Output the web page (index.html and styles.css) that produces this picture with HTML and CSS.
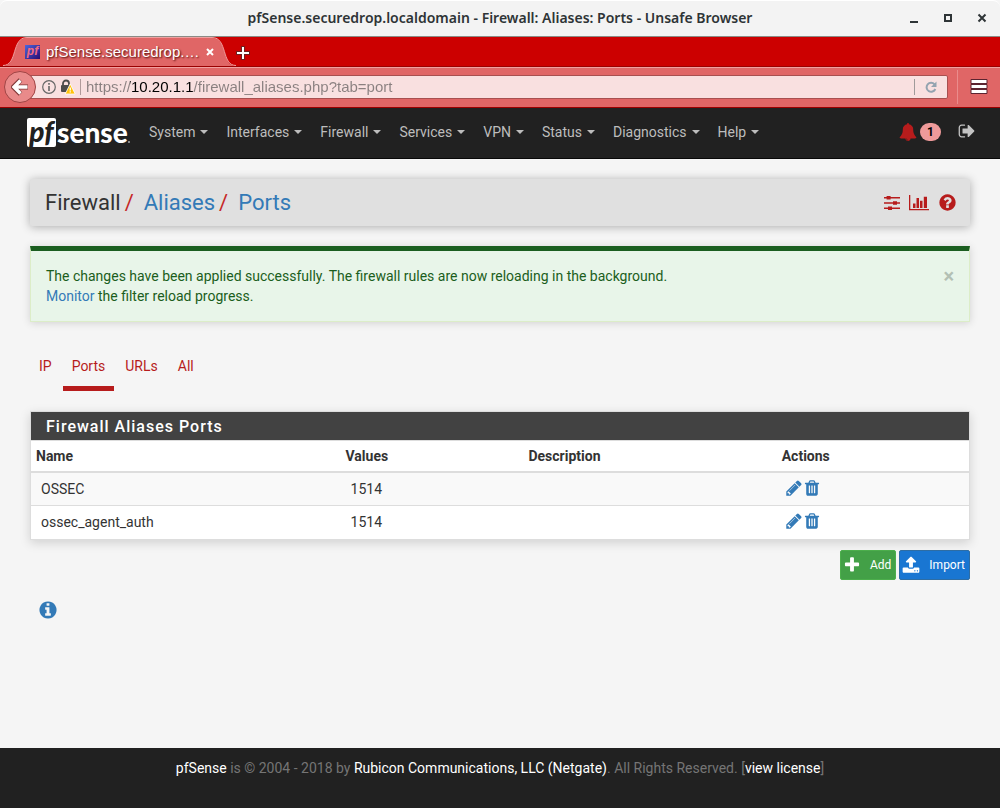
FILE: index.html
```html
<!DOCTYPE html>
<html lang="en">
<head>
<meta charset="utf-8">
<meta name="viewport" content="width=device-width, initial-scale=1">
<title>pfSense.securedrop.localdomain - Firewall: Aliases: Ports</title>
<link rel="stylesheet" href="styles.css">
</head>
<body>
<svg class="defs" width="0" height="0" aria-hidden="true">
  <symbol id="i-pencil" viewBox="0 0 1792 1792"><path d="M491 1536l91-91-235-235-91 91v107h128v128h107zm523-928q0-22-22-22-10 0-17 7l-542 542q-7 7-7 17 0 22 22 22 10 0 17-7l542-542q7-7 7-17zm-54-192l416 416-832 832h-416v-416zm683 96q0 53-37 90l-166 166-416-416 166-165q36-38 90-38 53 0 91 38l235 234q37 39 37 91z"/></symbol>
  <symbol id="i-trash" viewBox="0 0 1792 1792"><path d="M704 1376v-704q0-14-9-23t-23-9h-64q-14 0-23 9t-9 23v704q0 14 9 23t23 9h64q14 0 23-9t9-23zm256 0v-704q0-14-9-23t-23-9h-64q-14 0-23 9t-9 23v704q0 14 9 23t23 9h64q14 0 23-9t9-23zm256 0v-704q0-14-9-23t-23-9h-64q-14 0-23 9t-9 23v704q0 14 9 23t23 9h64q14 0 23-9t9-23zm-544-992h448l-48-117q-7-9-17-11h-317q-10 2-17 11zm928 32v64q0 14-9 23t-23 9h-96v948q0 83-47 143.5t-113 60.5h-832q-66 0-113-58.5t-47-141.5v-952h-96q-14 0-23-9t-9-23v-64q0-14 9-23t23-9h309l70-167q15-37 54-63t79-26h320q40 0 79 26t54 63l70 167h309q14 0 23 9t9 23z"/></symbol>
</svg>

<header class="browser">
  <div class="titlebar">
    <div class="window-title">pfSense.securedrop.localdomain - Firewall: Aliases: Ports - Unsafe Browser</div>
    <div class="window-controls">
      <button type="button" aria-label="Minimize"><svg width="10" height="10" viewBox="0 0 10 10"><path d="M1 8h8v2H1z" fill="#2e3436"/></svg></button>
      <button type="button" aria-label="Maximize"><svg width="10" height="10" viewBox="0 0 10 10"><path d="M2 2h6v6H2z" fill="none" stroke="#2e3436" stroke-width="2"/></svg></button>
      <button type="button" aria-label="Close"><svg width="10" height="10" viewBox="0 0 10 10"><path d="M1.500 1.500l7 7m0-7l-7 7" stroke="#2e3436" stroke-width="2"/></svg></button>
    </div>
  </div>
  <div class="tabstrip">
    <div class="browser-tab">
      <svg class="tab-shape" width="240" height="29" viewBox="0 0 240 29" aria-hidden="true"><path d="M3 29C18 29 11 1 27 1H212C228 1 221 29 236 29Z" fill="#e06666"/><path d="M3 28.500C18 28.500 11 .5 27 .5H212C228 .5 221 28.500 236 28.500" fill="none" stroke="#f0a0a0"/></svg>
      <span class="favicon">pf</span>
      <span class="tab-title">pfSense.securedrop.…</span>
      <button type="button" class="tab-close" aria-label="Close tab"><svg width="8" height="8" viewBox="0 0 8 8"><path d="M1 1l6 6m0-6L1 7" stroke="#fff" stroke-width="2"/></svg></button>
    </div>
    <button type="button" class="new-tab" aria-label="New tab"><svg width="14" height="14" viewBox="0 0 14 14"><path d="M7 0v14M0 7h14" stroke="#6d2020" stroke-width="4"/><path d="M7 1v12M1 7h12" stroke="#fff" stroke-width="2"/></svg></button>
  </div>
  <div class="toolbar">
    <button type="button" class="back" aria-label="Back"><svg width="18" height="18" viewBox="0 0 18 18"><path d="M9.500 2L2.500 9L9.500 16M3 9H17" fill="none" stroke="#7d3434" stroke-width="5"/><path d="M9.500 2.500L3 9L9.500 15.500M3 9H16.500" fill="none" stroke="#fff" stroke-width="3.400"/></svg></button>
    <div class="urlbar">
      <svg width="14" height="14" viewBox="0 0 14 14"><circle cx="7" cy="7" r="6.300" fill="none" stroke="#666" stroke-width="1.200"/><path d="M6.200 6h1.600v5H6.200zM6.200 3h1.600v1.800H6.200z" fill="#666"/></svg>
      <svg width="16" height="16" viewBox="0 0 16 16"><path d="M3 7V4.500a3 3 0 0 1 6 0V7" fill="none" stroke="#4c4c4c" stroke-width="1.800"/><rect x="1" y="6" width="9" height="7" rx="1" fill="#4c4c4c"/><path d="M10.200 5l5 10H5.200z" fill="#ffc20a" stroke="#fff" stroke-width=".8"/><path d="M9.600 8.500h1.300v3H9.600zm0 3.700h1.300v1.200H9.600z" fill="#fff"/></svg>
      <input class="url" type="text" aria-label="Address" value="https://10.20.1.1/firewall_aliases.php?tab=port">
      <button type="button" class="reload" aria-label="Reload"><svg width="12" height="12" viewBox="0 0 12 12"><path d="M9.500 3.300A4.500 4.500 0 1 0 10.300 8" fill="none" stroke="#94a3b0" stroke-width="2"/><path d="M11.500 .5v5.500H6z" fill="#94a3b0"/></svg></button>
    </div>
    <button type="button" class="menu" aria-label="Menu"><svg width="18" height="16" viewBox="0 0 18 16"><path d="M1 .5h16v4H1zM1 5.500h16v4H1zM1 10.500h16v4H1z" fill="#fff" stroke="#5c2430"/></svg></button>
  </div>
</header>

<nav class="navbar">
  <a class="logo" href="#" aria-label="pfSense home"><span class="logo-pf">pf</span><span class="logo-sense">sense</span><i class="logo-dot"></i></a>
  <ul class="menu-list">
    <li><a href="#">System <i class="caret"></i></a></li>
    <li><a href="#">Interfaces <i class="caret"></i></a></li>
    <li><a href="#">Firewall <i class="caret"></i></a></li>
    <li><a href="#">Services <i class="caret"></i></a></li>
    <li><a href="#">VPN <i class="caret"></i></a></li>
    <li><a href="#">Status <i class="caret"></i></a></li>
    <li><a href="#">Diagnostics <i class="caret"></i></a></li>
    <li><a href="#">Help <i class="caret"></i></a></li>
  </ul>
  <a class="alerts" href="#" aria-label="Notices"><svg width="18" height="18" viewBox="0 0 1792 1792"><path fill="#b71c1c" d="M912 1696q0-16-16-16-59 0-101.500-42.500t-42.500-101.500q0-16-16-16t-16 16q0 73 51.500 124.500t124.500 51.500q16 0 16-16zm816-288q0 52-38 90t-90 38h-448q0 106-75 181t-181 75-181-75-75-181h-448q-52 0-90-38t-38-90q50-42 91-88t85-119.500 74.500-158.500 50-206 19.500-260q0-152 117-282.500t307-158.500q-8-19-8-39 0-40 28-68t68-28 68 28 28 68q0 20-8 39 190 28 307 158.500t117 282.500q0 139 19.500 260t50 206 74.500 158.500 85 119.500 91 88z"/></svg><span class="badge">1</span></a>
  <a class="signout" href="#" aria-label="Log out"><svg width="18" height="18" viewBox="0 0 1792 1792"><path fill="#c4c4c4" d="M704 1440q0 4 1 20t.5 26.500-3 23.500-10 19.500-20.500 6.500h-320q-119 0-203.500-84.500t-84.500-203.500v-704q0-119 84.500-203.500t203.500-84.500h320q13 0 22.500 9.500t9.500 22.500q0 4 1 20t.5 26.500-3 23.500-10 19.500-20.500 6.500h-320q-66 0-113 47t-47 113v704q0 66 47 113t113 47h312l11.500 1 11.500 3 8 5.500 7 9 2 13.500zm928-544q0 26-19 45l-544 544q-19 19-45 19t-45-19-19-45v-288h-448q-26 0-45-19t-19-45v-384q0-26 19-45t45-19h448v-288q0-26 19-45t45-19 45 19l544 544q19 19 19 45z"/></svg></a>
</nav>

<main class="content">
  <header class="page-header">
    <h1 class="breadcrumb"><span>Firewall</span><span class="sep">/</span><a href="#">Aliases</a><span class="sep">/</span><a href="#">Ports</a></h1>
    <div class="header-icons">
      <a href="#" aria-label="Related settings"><svg width="16" height="16" viewBox="0 0 16 16" fill="#b71c1c"><path d="M0 2h16v1.400H0zM0 7.300h16v1.400H0zM0 12.600h16V14H0z"/><path d="M2.600 .9h4v3.600h-4zM9 6.200h4v3.600H9zM4 11.500h4v3.600H4z"/></svg></a>
      <a href="#" aria-label="Related status"><svg width="20" height="16" viewBox="0 0 20 16" fill="#b71c1c"><path d="M0 0h1.300v14H20v1.300H0zM4 8.500h2.500V13H4zM7.500 3H10v10H7.500zM11 5.800h2.500V13H11zM14.800 1.800H18V13h-3.200z"/></svg></a>
      <a href="#" aria-label="Help"><svg width="19" height="19" viewBox="0 0 1792 1792"><path fill="#b71c1c" d="M1024 1376v-192q0-14-9-23t-23-9h-192q-14 0-23 9t-9 23v192q0 14 9 23t23 9h192q14 0 23-9t9-23zm256-672q0-88-55.500-163t-138.500-116-170-41q-243 0-371 213-15 24 8 42l132 100q7 6 19 6 16 0 25-12 53-68 86-92 34-24 86-24 48 0 85.500 26t37.500 59q0 38-20 61t-68 45q-63 28-115.500 86.500t-52.500 125.500v36q0 14 9 23t23 9h192q14 0 23-9t9-23q0-19 21.500-49.500t54.500-49.500q32-18 49-28.500t46-35 44.500-48 28-60.500 12.500-81zm384 192q0 209-103 385.500t-279.500 279.500-385.500 103-385.500-103-279.500-279.500-103-385.500 103-385.500 279.500-279.500 385.500-103 385.500 103 279.500 279.500 103 385.500z"/></svg></a>
    </div>
  </header>

  <section class="alert">
    <p>The changes have been applied successfully. The firewall rules are now reloading in the background.<br><a href="#">Monitor</a> the filter reload progress.</p>
    <button type="button" class="dismiss" aria-label="Dismiss">×</button>
  </section>

  <ul class="tabs">
    <li><a href="#">IP</a></li>
    <li><a class="active" href="#">Ports</a></li>
    <li><a href="#">URLs</a></li>
    <li><a href="#">All</a></li>
  </ul>

  <section class="panel">
    <h2>Firewall Aliases Ports</h2>
    <table>
      <colgroup><col class="c-name"><col class="c-values"><col class="c-desc"><col class="c-actions"></colgroup>
      <thead><tr><th>Name</th><th>Values</th><th>Description</th><th>Actions</th></tr></thead>
      <tbody>
        <tr><td>OSSEC</td><td>1514</td><td></td><td><div class="row-actions"><a href="#" aria-label="Edit OSSEC"><svg><use href="#i-pencil"/></svg></a><a href="#" aria-label="Delete OSSEC"><svg><use href="#i-trash"/></svg></a></div></td></tr>
        <tr><td>ossec_agent_auth</td><td>1514</td><td></td><td><div class="row-actions"><a href="#" aria-label="Edit ossec_agent_auth"><svg><use href="#i-pencil"/></svg></a><a href="#" aria-label="Delete ossec_agent_auth"><svg><use href="#i-trash"/></svg></a></div></td></tr>
      </tbody>
    </table>
  </section>

  <div class="buttons">
    <button type="button" class="btn btn-add"><svg width="18" height="18" viewBox="0 0 1792 1792"><path fill="#fff" d="M1600 736v192q0 40-28 68t-68 28h-416v416q0 40-28 68t-68 28h-192q-40 0-68-28t-28-68v-416h-416q-40 0-68-28t-28-68v-192q0-40 28-68t68-28h416v-416q0-40 28-68t68-28h192q40 0 68 28t28 68v416h416q40 0 68 28t28 68z"/></svg>Add</button>
    <button type="button" class="btn btn-import"><svg width="18" height="18" viewBox="0 0 1792 1792"><path fill="#fff" d="M1344 1472q0-26-19-45t-45-19-45 19-19 45 19 45 45 19 45-19 19-45zm256 0q0-26-19-45t-45-19-45 19-19 45 19 45 45 19 45-19 19-45zm128-224v320q0 40-28 68t-68 28h-1472q-40 0-68-28t-28-68v-320q0-40 28-68t68-28h427q21 56 70.500 92t110.500 36h256q61 0 110.500-36t70.500-92h427q40 0 68 28t28 68zm-325-648q-17 40-59 40h-256v448q0 26-19 45t-45 19h-256q-26 0-45-19t-19-45v-448h-256q-42 0-59-40-17-39 14-69l448-448q18-19 45-19t45 19l448 448q31 30 14 69z"/></svg>Import</button>
  </div>

  <a class="info" href="#" aria-label="Information"><svg width="20" height="20" viewBox="0 0 1792 1792"><path fill="#337ab7" d="M1152 1376v-160q0-14-9-23t-23-9h-96v-512q0-14-9-23t-23-9h-320q-14 0-23 9t-9 23v160q0 14 9 23t23 9h96v320h-96q-14 0-23 9t-9 23v160q0 14 9 23t23 9h448q14 0 23-9t9-23zm-128-896v-160q0-14-9-23t-23-9h-192q-14 0-23 9t-9 23v160q0 14 9 23t23 9h192q14 0 23-9t9-23zm640 416q0 209-103 385.500t-279.500 279.500-385.500 103-385.500-103-279.500-279.500-103-385.500 103-385.500 279.500-279.500 385.500-103 385.500 103 279.500 279.500 103 385.500z"/></svg></a>
</main>

<footer class="footer"><a href="#">pfSense</a> is © 2004 - 2018 by <a href="#">Rubicon Communications, LLC (Netgate)</a>. All Rights Reserved. [<a href="#">view license</a>]</footer>
</body>
</html>
```

FILE: styles.css
```css
*, *::before, *::after { box-sizing: border-box; }

body {
  margin: 0;
  min-height: 100vh;
  display: flex;
  flex-direction: column;
  background: #f5f5f5;
  color: #333;
  font: 14px/20px Roboto, "Liberation Sans", sans-serif;
}

a { color: #337ab7; text-decoration: none; }
button { margin: 0; padding: 0; border: 0; background: none; font: inherit; cursor: pointer; }
svg { display: block; flex: none; }
ul { list-style: none; margin: 0; padding: 0; }
.defs { position: absolute; }

/* Browser window */
.titlebar {
  display: grid;
  grid-template-columns: 1fr auto 1fr;
  align-items: center;
  height: 37px;
  padding: 0 13px 2px;
  border-top: 1px solid #fff;
  border-bottom: 1px solid #8b8b85;
  border-radius: 7px 7px 0 0;
  background: #f3f3f3;
}
.window-title {
  grid-column: 2;
  color: #2e3436;
  font: 600 14px/20px "Noto Sans", sans-serif;
  white-space: nowrap;
}
.window-controls { display: flex; justify-content: flex-end; gap: 24px; }

.tabstrip {
  display: flex;
  align-items: flex-end;
  height: 30px;
  background: #c00;
  border-bottom: 1px solid #900;
}
.browser-tab {
  position: relative;
  display: flex;
  align-items: center;
  width: 240px;
  height: 29px;
  padding: 0 26px 0 25px;
  color: #fff;
  font: 15px/20px "Liberation Sans", sans-serif;
  text-shadow: 1px 1px 2px #400;
}
.tab-shape { position: absolute; left: 0; top: 0; z-index: 0; }
.favicon, .tab-title, .tab-close { position: relative; z-index: 1; }
.favicon {
  width: 15px;
  height: 14px;
  margin-right: 6px;
  background: linear-gradient(135deg, #4a66e0, #2a0a70);
  color: #f06a80;
  font: italic 700 12px/13px "Liberation Sans", sans-serif;
  text-align: center;
  text-shadow: none;
}
.tab-title { flex: 1; white-space: nowrap; }
.new-tab { margin: 0 0 6px -4px; }

.toolbar {
  display: flex;
  align-items: center;
  height: 41px;
  padding: 0 12px 2px 4px;
  background: #e06666;
  border-top: 1px solid #f0a0a0;
  border-bottom: 1px solid #900;
}
.back {
  z-index: 1;
  display: grid;
  place-items: center;
  width: 32px;
  height: 32px;
  border: 1px solid #a04444;
  border-radius: 50%;
  background: #e98a8a;
}
.urlbar {
  flex: 1;
  display: flex;
  align-items: center;
  gap: 4px;
  height: 24px;
  margin-left: -8px;
  padding-left: 13px;
  border: 1px solid #a85050;
  border-radius: 0 2px 2px 0;
  background: #f9e0e0;
}
.url {
  flex: 1;
  min-width: 0;
  height: 16px;
  padding: 0 0 0 5px;
  border: 0;
  border-left: 1px solid #b09a9a;
  outline: 0;
  background: linear-gradient(to right, #8a8080 49px, #000 49px, #000 112px, #8a8080 112px) text;
  color: transparent;
  font: 15px/16px "Liberation Sans", sans-serif;
}
.reload {
  display: grid;
  place-items: center;
  width: 33px;
  height: 16px;
  border-left: 1px solid #a09a9a;
}
.menu {
  display: grid;
  place-items: center end;
  width: 31px;
  height: 34px;
  margin-left: 9px;
  border-left: 1px solid #ea8c8c;
}

/* Main navigation */
.navbar {
  display: flex;
  align-items: center;
  height: 51px;
  padding: 0 24px 2px 27px;
  background: #212121;
  border-bottom: 1px solid #080808;
}
.logo { display: flex; align-items: center; width: 113px; color: #fff; font-family: Lato, sans-serif; }
.logo-pf {
  width: 29px;
  height: 29px;
  border-radius: 2px;
  background: #fff;
  color: #212121;
  font: italic 900 28px/26px Lato, sans-serif;
  text-align: center;
}
.logo-sense { margin-left: 1px; font-size: 28px; font-weight: 900; line-height: 28px; }
.logo-dot { width: 2px; height: 2px; margin-top: 20px; border-radius: 50%; background: #aaa; }
.menu-list { display: flex; flex: 1; }
.menu-list a { display: flex; align-items: center; gap: 5px; padding: 0 9px; color: #bdbdbd; }
.caret { border: 4px solid transparent; border-top-color: currentColor; border-bottom: 0; }
.alerts { display: flex; align-items: center; gap: 3px; margin-right: 17px; }
.signout { padding-bottom: 3px; }
.badge {
  min-width: 21px;
  border-radius: 10px;
  background: #ef9a9a;
  color: #000;
  font-size: 12px;
  font-weight: 700;
  line-height: 18px;
  text-align: center;
}

/* Page */
.content { flex: 1; padding: 20px 30px; }
.page-header {
  display: flex;
  align-items: center;
  justify-content: space-between;
  height: 47px;
  padding: 0 13px 0 15px;
  background: #e0e0e0;
  border-radius: 2px;
  box-shadow: 0 1px 10px rgba(0, 0, 0, .3);
}
.breadcrumb { display: flex; margin: 0; font-size: 22px; line-height: 24px; font-weight: 400; }
.sep { margin: 0 10px 0 4px; color: #c62828; }
.header-icons { display: flex; align-items: center; gap: 9px; }

.alert {
  display: flex;
  justify-content: space-between;
  margin-top: 20px;
  padding: 15px;
  border: 1px solid #dcedc8;
  border-top: 5px solid #1b5e20;
  background: #e8f5e9;
  color: #1b5e20;
  box-shadow: 0 1px 8px rgba(0, 0, 0, .15);
}
.alert p { margin: 0; }
.dismiss { height: 20px; color: #b3c0b4; font-size: 20px; font-weight: 700; }

.tabs { display: flex; gap: 2px; margin-top: 34px; }
.tabs a { display: block; padding: 0 9px 10px; border-bottom: 5px solid transparent; color: #b71c1c; }
.tabs .active { border-color: #b71c1c; }

.panel {
  margin-top: 20px;
  border: 1px solid #ddd;
  background: #fff;
  box-shadow: 0 3px 10px rgba(0, 0, 0, .15);
}
.panel h2 {
  margin: 0;
  padding: 5px 15px 3px;
  background: #424242;
  color: #fff;
  font-size: 16px;
  font-weight: 500;
  line-height: 20px;
  letter-spacing: 1px;
}
table { width: 100%; border-collapse: separate; border-spacing: 0; table-layout: fixed; border-top: 1px solid #ddd; }
.c-name { width: 33%; }
.c-values { width: 19.500%; }
.c-desc { width: 27%; }
th { padding: 5px; border-bottom: 2px solid #ddd; text-align: left; font-weight: 700; }
td { padding: 6px 10px; border-bottom: 1px solid transparent; }
tbody tr:first-child td { background: #f9f9f9; border-bottom-color: #ddd; }
.row-actions { display: flex; align-items: flex-start; height: 20px; margin-left: -2px; }
.row-actions svg { width: 18px; height: 18px; fill: #337ab7; }

.buttons { display: flex; justify-content: flex-end; gap: 3px; margin-top: 10px; }
.btn {
  display: flex;
  align-items: center;
  gap: 9px;
  height: 30px;
  padding: 0 4px 0 2px;
  border: 1px solid;
  border-radius: 2px;
  color: #fff;
  font-size: 12px;
}
.btn-add { background: #43a047; border-color: #4cae4c; }
.btn-import { background: #1976d2; border-color: #2e6da4; }
.info { display: inline-block; margin: 20px 0 0 8px; }

.footer { height: 60px; padding: 10px; background: #212121; color: #757575; text-align: center; }
.footer a { color: #fff; }
```
